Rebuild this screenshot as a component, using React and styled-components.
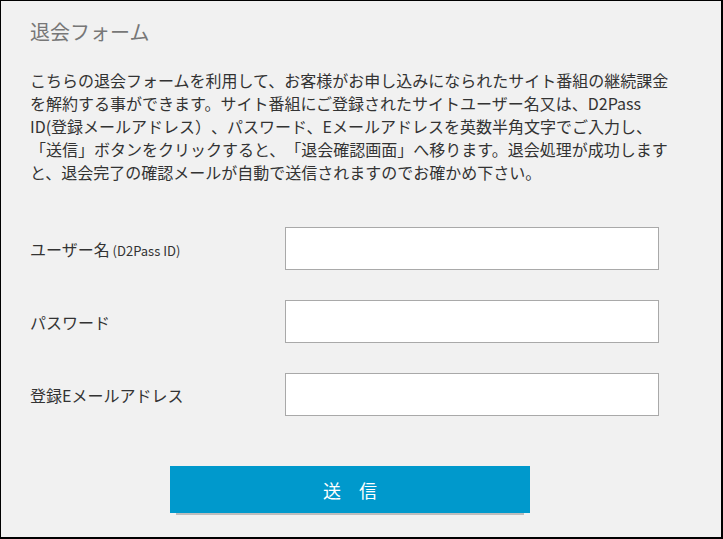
import styled, { createGlobalStyle } from "styled-components";

const GlobalStyle = createGlobalStyle`
  html, body {
    margin: 0;
    padding: 0;
    background: #ffffff;
  }
  * {
    box-sizing: border-box;
  }
`;

const fields = [
  { label: "ユーザー名", note: "(D2Pass ID)", name: "username", type: "text" },
  { label: "パスワード", name: "password", type: "password" },
  { label: "登録Eメールアドレス", name: "email", type: "email" },
];

function App() {
  return (
    <>
      <GlobalStyle />
      <Page>
        <Title>退会フォーム</Title>
        <Intro>
          こちらの退会フォームを利用して、お客様がお申し込みになられたサイト番組の継続課金を解約する事ができます。サイト番組にご登録されたサイトユーザー名又は、D2Pass
          ID(登録メールアドレス）、パスワード、Eメールアドレスを英数半角文字でご入力し、「送信」ボタンをクリックすると、「退会確認画面」へ移ります。退会処理が成功しますと、退会完了の確認メールが自動で送信されますのでお確かめ下さい。
        </Intro>
        <Form onSubmit={(e) => e.preventDefault()}>
          {fields.map((f) => (
            <Row key={f.name}>
              <Label htmlFor={f.name}>
                {f.label}
                {f.note && <Note> {f.note}</Note>}
              </Label>
              <Input id={f.name} name={f.name} type={f.type} />
            </Row>
          ))}
          <Actions>
            <SubmitButton type="submit">送　信</SubmitButton>
          </Actions>
        </Form>
      </Page>
    </>
  );
}

export default App;

const Page = styled.div`
  width: 723px;
  height: 539px;
  background-color: #f1f1f1;
  border-style: solid;
  border-color: #000;
  border-width: 1px 2px 2px 1px;
  padding: 17px 0 0 29px;
  font-family: "Noto Sans CJK JP", "Noto Sans", sans-serif;
  color: #333;
  text-spacing-trim: space-all;
`;

const Title = styled.h1`
  margin: 0;
  font-size: 20px;
  line-height: 28px;
  font-weight: 400;
  color: #777;
`;

const Intro = styled.p`
  width: 642px;
  margin: 23px 0 0;
  font-size: 16px;
  line-height: 23px;
  color: #333;
`;

const Form = styled.form`
  width: 640px;
  margin-top: 43px;
  display: flex;
  flex-direction: column;
  gap: 30px;
`;

const Row = styled.div`
  display: flex;
  align-items: center;
`;

const Label = styled.label`
  width: 255px;
  font-size: 16px;
  color: #333;
`;

const Note = styled.span`
  font-size: 13px;
`;

const Input = styled.input`
  width: 374px;
  height: 43px;
  background-color: #fff;
  border: 1px solid #a9a9a9;
  border-radius: 0;
  padding: 0 8px;
  font-size: 15px;

  &:focus {
    outline: none;
  }
`;

const Actions = styled.div`
  display: flex;
  justify-content: center;
  margin-top: 20px;
`;

const SubmitButton = styled.button`
  width: 360px;
  height: 47px;
  background-color: #0099cc;
  color: #fff;
  border: none;
  border-radius: 0;
  box-shadow: 0 8px 0 -6px #bdbdbd;
  font-family: "Noto Sans CJK JP", sans-serif;
  font-size: 18px;
  cursor: pointer;
`;
